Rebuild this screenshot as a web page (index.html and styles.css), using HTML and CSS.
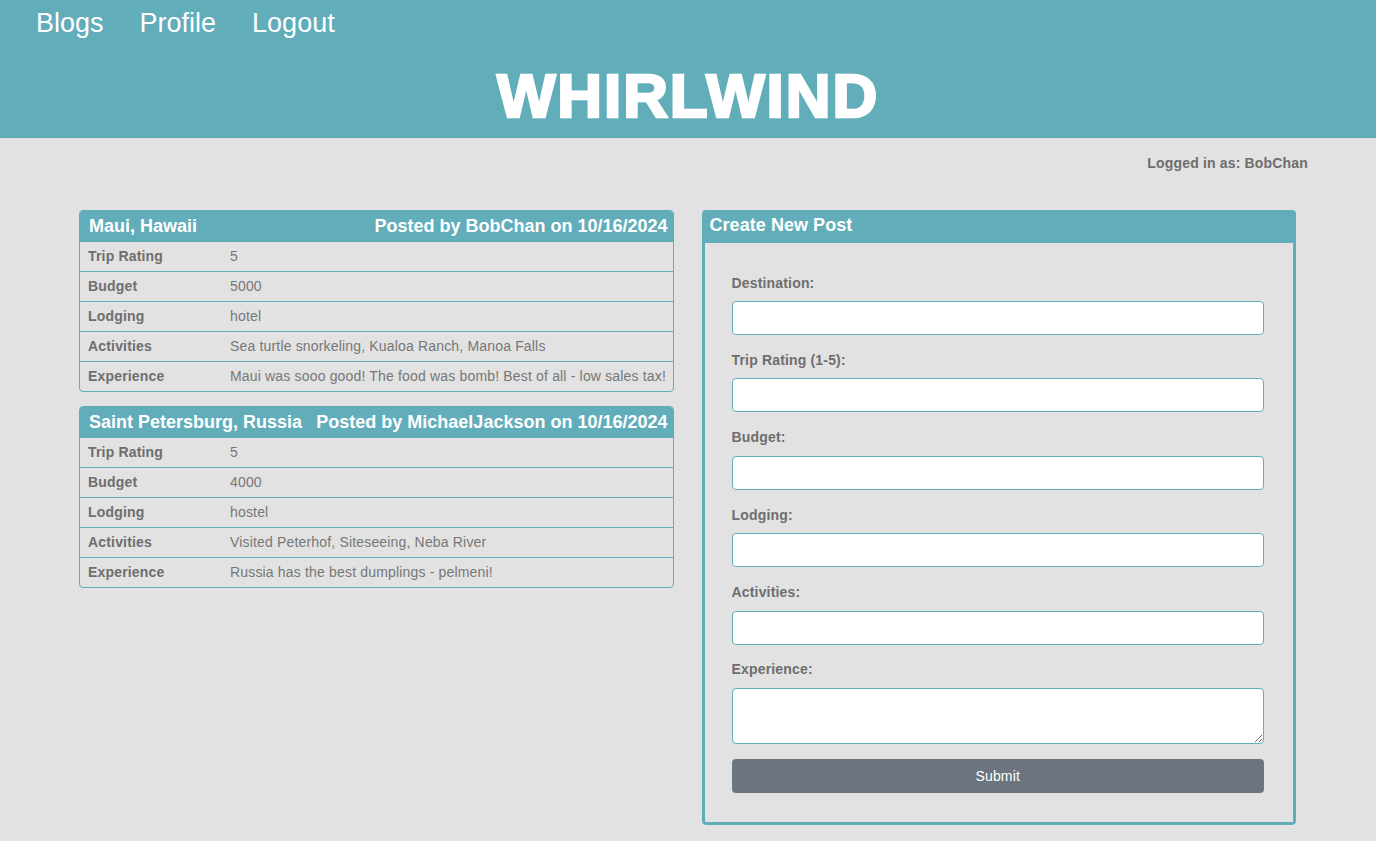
FILE: index.html
```html
<!DOCTYPE html>
<html>
<head>
<meta charset="utf-8">
<link rel="stylesheet" href="styles.css">
</head>
<body>
<header class="site-header">
  <nav class="nav">
    <a class="nav-link" href="#">Blogs</a>
    <a class="nav-link" href="#">Profile</a>
    <a class="nav-link" href="#">Logout</a>
  </nav>
  <h1 class="brand">WHIRLWIND</h1>
</header>
<div class="login-bar">Logged in as: BobChan</div>
<main class="main">
  <section class="posts">
    <article class="post">
      <div class="post-head"><span>Maui, Hawaii</span><span>Posted by BobChan on 10/16/2024</span></div>
      <div class="row"><span class="k">Trip Rating</span><span class="v">5</span></div>
      <div class="row"><span class="k">Budget</span><span class="v">5000</span></div>
      <div class="row"><span class="k">Lodging</span><span class="v">hotel</span></div>
      <div class="row"><span class="k">Activities</span><span class="v">Sea turtle snorkeling, Kualoa Ranch, Manoa Falls</span></div>
      <div class="row"><span class="k">Experience</span><span class="v">Maui was sooo good! The food was bomb! Best of all - low sales tax!</span></div>
    </article>
    <article class="post">
      <div class="post-head"><span>Saint Petersburg, Russia</span><span>Posted by MichaelJackson on 10/16/2024</span></div>
      <div class="row"><span class="k">Trip Rating</span><span class="v">5</span></div>
      <div class="row"><span class="k">Budget</span><span class="v">4000</span></div>
      <div class="row"><span class="k">Lodging</span><span class="v">hostel</span></div>
      <div class="row"><span class="k">Activities</span><span class="v">Visited Peterhof, Siteseeing, Neba River</span></div>
      <div class="row"><span class="k">Experience</span><span class="v">Russia has the best dumplings - pelmeni!</span></div>
    </article>
  </section>
  <section class="create">
    <div class="create-head">Create New Post</div>
    <form class="create-body">
      <div class="group"><label class="lbl">Destination:</label><input class="inp" type="text"></div>
      <div class="group"><label class="lbl">Trip Rating (1-5):</label><input class="inp" type="text"></div>
      <div class="group"><label class="lbl">Budget:</label><input class="inp" type="text"></div>
      <div class="group"><label class="lbl">Lodging:</label><input class="inp" type="text"></div>
      <div class="group"><label class="lbl">Activities:</label><input class="inp" type="text"></div>
      <div class="group last"><label class="lbl">Experience:</label><textarea class="inp ta"></textarea></div>
      <button class="submit" type="button">Submit</button>
    </form>
  </section>
</main>
</body>
</html>
```
FILE: styles.css
```css
* { box-sizing: border-box; }
html, body { margin: 0; padding: 0; }
body {
  background: #e2e2e2;
  font-family: "Liberation Sans", Arial, sans-serif;
  color: #777;
  font-size: 14px;
  letter-spacing: 0.17px;
}
.site-header {
  background: #62adba;
  height: 138px;
  padding-top: 5px;
}
.nav {
  display: flex;
  gap: 36px;
  padding-left: 36px;
  height: 36px;
  align-items: center;
}
.nav-link {
  color: #fff;
  text-decoration: none;
  font-size: 27px;
  line-height: 36px;
  letter-spacing: 0;
}
.brand {
  margin: 0;
  text-align: center;
  color: #fff;
  font-size: 62px;
  font-weight: 900;
  line-height: 1;
  letter-spacing: 1.9px;
  padding-top: 24px;
  -webkit-text-stroke: 2.6px #fff;
}
.login-bar {
  text-align: right;
  padding: 17px 68px 0 0;
  height: 50px;
  font-weight: bold;
  font-size: 14px;
  line-height: 17px;
  color: #6e6e6e;
}
.main {
  display: flex;
  gap: 28px;
  padding: 22px 80px 16px 79px;
  align-items: flex-start;
}
.posts {
  flex: 1;
  display: flex;
  flex-direction: column;
  gap: 14px;
}
.post {
  border: 1px solid #62adba;
  border-radius: 4px;
  overflow: hidden;
}
.post-head {
  background: #62adba;
  color: #fff;
  font-weight: bold;
  font-size: 18px;
  height: 31px;
  line-height: 31px;
  display: flex;
  justify-content: space-between;
  padding: 0 5px 0 9px;
  letter-spacing: 0;
}
.row {
  display: flex;
  height: 30px;
  line-height: 28px;
  border-top: 1px solid #62adba;
}
.post-head + .row { border-top: none; height: 29px; }
.k {
  width: 150px;
  padding-left: 8px;
  font-weight: bold;
  color: #6e6e6e;
  flex: none;
}
.v { color: #777; }
.create {
  flex: 1;
  border-radius: 4px;
  overflow: hidden;
}
.create-head {
  background: #62adba;
  color: #fff;
  font-weight: bold;
  font-size: 18px;
  height: 33px;
  line-height: 30px;
  padding-left: 8px;
  letter-spacing: 0.05px;
}
.create-body {
  border: 3px solid #62adba;
  border-top: none;
  border-radius: 0 0 4px 4px;
  padding: 31.5px 29px 29px 27px;
  margin: 0;
}
.group { margin-bottom: 16.9px; }
.group.last { margin-bottom: 15px; }
.lbl {
  display: block;
  font-weight: bold;
  color: #6e6e6e;
  line-height: 17px;
  margin-bottom: 9.5px;
}
.inp {
  display: block;
  width: 100%;
  height: 34px;
  border: 1px solid #62adba;
  border-radius: 4px;
  background: #fff;
  margin: 0;
  font-family: inherit;
}
.ta { height: 56px; }
.submit {
  display: block;
  width: 100%;
  height: 34px;
  background: #6c757d;
  color: #fff;
  border: none;
  border-radius: 4px;
  font-family: inherit;
  font-size: 14px;
  letter-spacing: 0.17px;
}
```
